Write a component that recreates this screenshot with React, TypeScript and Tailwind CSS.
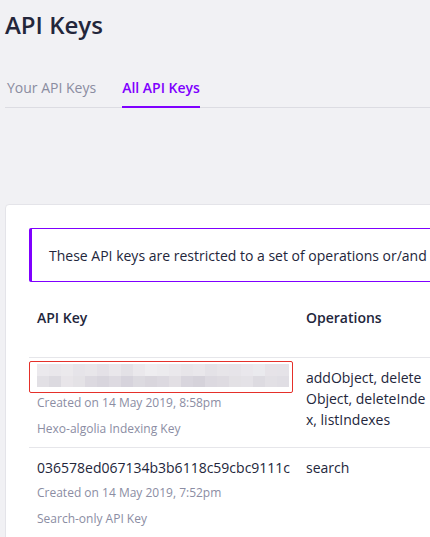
import React from 'react';

const mosaicTop = [
  '#ebe9ed', '#e9e7eb', '#ebe9ec', '#e6e4e9', '#e8e6ea', '#e4e1e7', '#e9e7eb', '#e3e1e6', '#eae8ec', '#eeedf0', '#ecebee',
  '#eae8ec', '#e7e5e9', '#e9e7eb', '#e4e2e7', '#e7e5e9', '#e6e4e9', '#e9e7ec', '#eaeaee', '#e6e3e8', '#e5e3e8',
];
const mosaicBottom = [
  '#e2e0e5', '#dcdae0', '#e8e5e9', '#e4e2e6', '#dcd9e0', '#d8d5dd', '#dddae1', '#d6d3dc', '#dcdae0', '#d9d6dd', '#dcd9e0',
  '#e2dfe4', '#d8d5dd', '#d5d2da', '#dcd9e0', '#dedbe1', '#e3e1e5', '#e4e2e7', '#dddbe1', '#e2e0e5', '#e0dee4',
];

// blurred-out key
function Mosaic() {
  return (
    <div className="absolute left-[8px] top-[-3px] flex flex-col">
      <div className="flex">
        {mosaicTop.map((c, i) => (
          <div key={i} className="w-[12px] h-[12px]" style={{ backgroundColor: c }} />
        ))}
      </div>
      <div className="flex">
        {mosaicBottom.map((c, i) => (
          <div key={i} className="w-[12px] h-[11px]" style={{ backgroundColor: c }} />
        ))}
      </div>
    </div>
  );
}

interface KeyRow {
  key?: string;
  hidden?: boolean;
  created: string;
  label: string;
  operations: string;
}

const rows: KeyRow[] = [
  {
    hidden: true,
    created: 'Created on 14 May 2019, 8:58pm',
    label: 'Hexo-algolia Indexing Key',
    operations: 'addObject, deleteObject, deleteIndex, listIndexes',
  },
  {
    key: '036578ed067134b3b6118c59cbc9111c',
    created: 'Created on 14 May 2019, 7:52pm',
    label: 'Search-only API Key',
    operations: 'search',
  },
];

export default function App() {
  return (
    <div
      className="w-[430px] h-[537px] overflow-hidden bg-[#f1f1f4] px-[5px] text-[#23263b]"
      style={{ fontFamily: '"Open Sans", "Noto Sans", sans-serif' }}
    >
      <h1 className="pt-[9px] text-[24px] leading-[32px] font-semibold text-[#23263b]">API Keys</h1>

      <div className="mt-[36px] flex gap-[26px] pl-[2px] border-b border-[#dcdce2] w-[425px]">
        <div className="pb-[8px] border-b-2 border-transparent -mb-px text-[14px] leading-[21px] text-[#8a8ca0]">
          Your API Keys
        </div>
        <div className="pb-[8px] border-b-2 border-[#7f00ff] -mb-px text-[14px] leading-[21px] font-semibold text-[#7f00ff]">
          All API Keys
        </div>
      </div>

      <div className="mt-[96px] w-[640px] bg-white border border-[#e4e4e9] rounded-[4px] p-[23px]">
        <div className="h-[54px] flex items-center border border-[#7f00ff] border-l-[3px] rounded-[2px] pl-[17px] whitespace-nowrap text-[14px] leading-[21px] text-[#23263b]">
          These API keys are restricted to a set of operations or/and
        </div>

        <div className="mt-[16px]">
          <div className="flex pt-[9px] pb-[29px] border-b border-[#e6e6ea] text-[14px] leading-[21px] font-semibold text-[#23263b]">
            <div className="w-[269px] pl-2">API Key</div>
            <div className="w-[130px] pl-2">Operations</div>
          </div>

          {rows.map((r, i) => (
            <div key={i} className="flex pt-[9px] pb-[5px] border-b border-[#e6e6ea]">
              <div className="w-[269px]">
                <div className="relative h-[21px] pl-2 text-[14px] leading-[21px] text-[#23263b]">
                  {r.hidden ? (
                    <>
                      <Mosaic />
                      <div className="absolute left-0 top-[-6px] w-[264px] h-[32px] border border-[#e5302a] rounded-[2px]" />
                    </>
                  ) : (
                    r.key
                  )}
                </div>
                <div className="mt-[2px] pl-2 text-[12px] leading-[26px] text-[#8b8da3]">{r.created}</div>
                <div className="pl-2 text-[12px] leading-[26px] text-[#8b8da3]">{r.label}</div>
              </div>
              <div className="w-[122px] ml-2 text-[14px] leading-[21px] break-all text-[#23263b]">
                {r.operations}
              </div>
            </div>
          ))}
        </div>
      </div>
    </div>
  );
}
